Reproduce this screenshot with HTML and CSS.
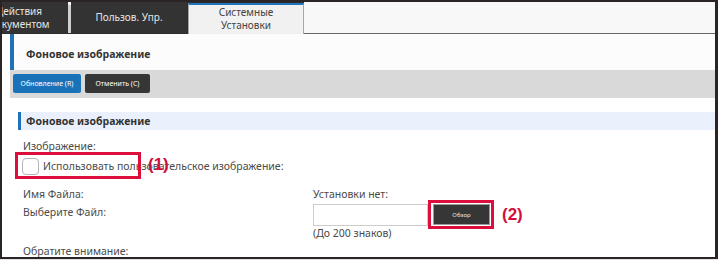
FILE: index.html
```html
<!DOCTYPE html>
<html lang="ru">
<head>
<meta charset="utf-8">
<title>Фоновое изображение</title>
<link rel="stylesheet" href="styles.css">
</head>
<body>
<div class="frame">
  <div class="tabs">
    <div class="tab tab-dark tab-first">Действия<br>Документом</div>
    <div class="tab-sep"></div>
    <div class="tab tab-dark tab-second">Пользов. Упр.</div>
    <div class="tab tab-active">Системные<br>Установки</div>
    <div class="tab-fill"></div>
  </div>
  <div class="main">
    <div class="page-head">Фоновое изображение</div>
    <div class="toolbar">
      <button class="btn btn-primary">Обновление (R)</button>
      <button class="btn btn-dark">Отменить (C)</button>
    </div>
    <div class="section">
      <div class="section-head">Фоновое изображение</div>
      <div class="form">
        <div class="line line-first">Изображение:</div>
        <div class="check-row">
          <span class="checkbox"></span>
          <span class="check-label">Использовать пользовательское изображение:</span>
          <span class="mark mark-1"></span>
          <span class="callout callout-1">(1)</span>
        </div>
        <div class="grid">
          <div class="line">Имя Файла:</div>
          <div class="line">Установки нет:</div>
          <div class="line">Выберите Файл:</div>
          <div class="file-row">
            <span class="file-input"></span>
            <span class="browse-wrap">
              <button class="btn-browse">Обзор</button>
              <span class="mark mark-2"></span>
              <span class="callout callout-2">(2)</span>
            </span>
          </div>
          <div></div>
          <div class="line hint">(До 200 знаков)</div>
        </div>
        <div class="line">Обратите внимание:</div>
      </div>
    </div>
  </div>
</div>
</body>
</html>
```

FILE: styles.css
```css
html, body {
  margin: 0;
  padding: 0;
  background: #e6e2e2;
}

body {
  font-family: "Noto Sans", "Open Sans", sans-serif;
  color: #444;
}

.frame {
  width: 718px;
  height: 259px;
  box-sizing: border-box;
  border: 2px solid #2a2424;
  border-right-width: 3px;
  background: #fff;
  overflow: hidden;
}

/* Tabs */
.tabs {
  display: flex;
  height: 32px;
  background: #2e2e2e;
  overflow: hidden;
}

.tab {
  flex: none;
  display: flex;
  align-items: center;
  justify-content: center;
  text-align: center;
  font-size: 10px;
  line-height: 13px;
  box-sizing: border-box;
}

.tab-dark {
  background: #333;
  color: #e4e4e4;
  height: 31px;
}

.tab-first {
  width: 104px;
  margin-left: -38px;
  padding-left: 6px;
}

.tab-sep {
  flex: none;
  width: 3px;
  height: 31px;
  background: #cfcfcf;
  border-top: 3px solid #f4f4f4;
  box-sizing: border-box;
}

.tab-second {
  width: 116px;
}

.tab-active {
  width: 116px;
  margin-left: 1px;
  margin-top: 1px;
  height: 31px;
  background: #f1f1f1;
  color: #444;
  border: 1px solid #a8a8a8;
  border-top: 2px solid #1f75bb;
  border-bottom: none;
  padding-bottom: 1px;
}

.tab-fill {
  flex: 1;
  height: 32px;
  box-sizing: border-box;
  background: #f8f8f8;
  border-bottom: 1px solid #666;
}

/* Main */
.main {
  padding-left: 8px;
}

.page-head {
  height: 36px;
  box-sizing: border-box;
  border-left: 4px solid #1f72b8;
  background: #fcfcfc;
  padding-left: 12px;
  padding-top: 12px;
  font-size: 10.5px;
  line-height: 17px;
  font-weight: 700;
  color: #333;
}

.toolbar {
  height: 28px;
  box-sizing: border-box;
  background: #d9d9d9;
  padding: 4px 3px 0;
  display: flex;
  gap: 4px;
  align-items: flex-start;
}

.btn {
  height: 19px;
  border: none;
  border-radius: 2px;
  font-family: "Noto Sans", "Open Sans", sans-serif;
  font-size: 7px;
  color: #fff;
  padding: 0;
  cursor: pointer;
}

.btn-primary {
  width: 68px;
  background: #1a72b9;
}

.btn-dark {
  width: 65px;
  background: #363636;
}

.section {
  margin-top: 14px;
}

.section-head {
  margin-left: 8px;
  height: 18px;
  box-sizing: border-box;
  border-left: 3px solid #1f72b8;
  background: #eaf1fd;
  padding-left: 5px;
  font-size: 10.5px;
  line-height: 18px;
  font-weight: 700;
  color: #333;
}

.form {
  padding-left: 13px;
}

.line {
  font-size: 10.5px;
  line-height: 18px;
  color: #4a4a4a;
  white-space: nowrap;
}

.line-first {
  margin-top: 7px;
}

.check-row {
  position: relative;
  display: flex;
  align-items: center;
  height: 20px;
  margin-top: 1px;
  font-size: 10.5px;
  color: #4a4a4a;
}

.checkbox {
  width: 17px;
  height: 17px;
  margin-left: -1px;
  box-sizing: border-box;
  border: 1px solid #b5b5b5;
  border-radius: 4px;
  background: #fff;
}

.check-label {
  margin-left: 4px;
  line-height: 18px;
}

.mark {
  position: absolute;
  box-sizing: border-box;
  border: 3px solid #dc0f3c;
}

.mark-1 {
  left: -8px;
  top: -4px;
  width: 126px;
  height: 27px;
}

.callout {
  position: absolute;
  font-family: "Liberation Sans", Arial, sans-serif;
  font-weight: 700;
  font-size: 17px;
  line-height: 20px;
  color: #d20f3a;
}

.callout-1 {
  left: 125px;
  top: -1px;
}

.grid {
  display: grid;
  grid-template-columns: 290px 1fr;
  margin-top: 9px;
}

.file-row {
  display: flex;
  align-items: flex-start;
  height: 22px;
}

.file-input {
  width: 115px;
  height: 22px;
  margin-top: 1px;
  box-sizing: border-box;
  border: 1px solid #cdcdcd;
  background: #fff;
}

.browse-wrap {
  position: relative;
  margin-left: 5px;
  margin-top: 1px;
}

.btn-browse {
  display: block;
  width: 57px;
  height: 21px;
  box-sizing: border-box;
  border: 1px solid #9a9a9a;
  background: #363636;
  color: #e8e8e8;
  font-family: "Noto Sans", "Open Sans", sans-serif;
  font-size: 6px;
  padding: 0;
}

.mark-2 {
  left: -5px;
  top: -4px;
  width: 66px;
  height: 29px;
}

.callout-2 {
  left: 69px;
  top: 1px;
}

.hint {
  margin-top: -1px;
}
```
